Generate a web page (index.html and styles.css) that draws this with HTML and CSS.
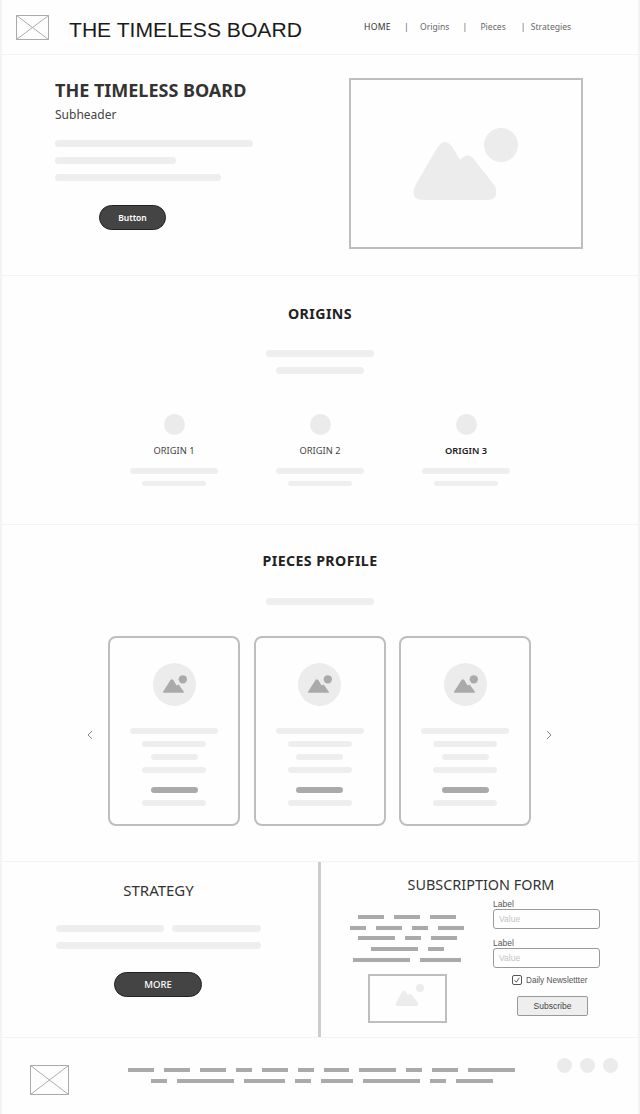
FILE: index.html
```html
<!DOCTYPE html>
<html lang="en">
<head>
<meta charset="utf-8">
<title>The Timeless Board</title>
<link rel="stylesheet" href="styles.css">
</head>
<body>
<div class="page">
  <header class="site-header">
    <svg class="logo" viewBox="0 0 33 25"><path d="M.5.5h32v24H.5zM.5.5l32 24M32.5.5L.5 24.5"/></svg>
    <div class="brand">THE TIMELESS BOARD</div>
    <nav class="nav">
      <a class="nav-home">HOME</a><span class="sep s1">|</span>
      <a>Origins</a><span class="sep s2">|</span>
      <a>Pieces</a><span class="sep s3">|</span>
      <a>Strategies</a>
    </nav>
  </header>

  <section class="hero">
    <div class="hero-text">
      <h1>THE TIMELESS BOARD</h1>
      <p class="sub">Subheader</p>
      <div class="bar w198"></div>
      <div class="bar w121"></div>
      <div class="bar w166"></div>
      <a class="pill hero-btn">Button</a>
    </div>
    <div class="hero-img">
      <svg viewBox="0 0 106 72" class="pic-lg"><path d="M2 58 L24 20 Q32 8 40 20 L47 32 Q56 22 63 34 L82 58 Q87 72 74 72 H10 Q-3 72 2 58Z"/><circle cx="88" cy="17" r="17"/></svg>
    </div>
  </section>

  <section class="origins">
    <h2>ORIGINS</h2>
    <div class="bar w108"></div>
    <div class="bar w88 second"></div>
    <div class="origin-grid">
      <div class="origin"><span class="dot"></span><h3>ORIGIN 1</h3><div class="bar thin w88"></div><div class="bar thin w64"></div></div>
      <div class="origin"><span class="dot"></span><h3>ORIGIN 2</h3><div class="bar thin w88"></div><div class="bar thin w64"></div></div>
      <div class="origin"><span class="dot"></span><h3 class="strong">ORIGIN 3</h3><div class="bar thin w88"></div><div class="bar thin w64"></div></div>
    </div>
  </section>

  <section class="pieces">
    <h2>PIECES PROFILE</h2>
    <div class="bar w108"></div>
    <div class="carousel">
      <svg class="arrow" viewBox="0 0 12 12"><path d="M8 2L4 6l4 4"/></svg>
      <article class="card">
        <div class="avatar"><svg viewBox="0 0 24 18"><path d="M1 16L8 5q1-2 3 0l3 5 2-1 5 7q1 1-1 1H2q-2 0-1-1z"/><circle cx="20" cy="4" r="4"/></svg></div>
        <div class="bar thin w88"></div><div class="bar thin w64 c1"></div><div class="bar thin w47 c1"></div><div class="bar thin w64 c1"></div>
        <div class="bar thin w47 dark"></div><div class="bar thin w64 c2"></div>
      </article>
      <article class="card">
        <div class="avatar"><svg viewBox="0 0 24 18"><path d="M1 16L8 5q1-2 3 0l3 5 2-1 5 7q1 1-1 1H2q-2 0-1-1z"/><circle cx="20" cy="4" r="4"/></svg></div>
        <div class="bar thin w88"></div><div class="bar thin w64 c1"></div><div class="bar thin w47 c1"></div><div class="bar thin w64 c1"></div>
        <div class="bar thin w47 dark"></div><div class="bar thin w64 c2"></div>
      </article>
      <article class="card">
        <div class="avatar"><svg viewBox="0 0 24 18"><path d="M1 16L8 5q1-2 3 0l3 5 2-1 5 7q1 1-1 1H2q-2 0-1-1z"/><circle cx="20" cy="4" r="4"/></svg></div>
        <div class="bar thin w88"></div><div class="bar thin w64 c1"></div><div class="bar thin w47 c1"></div><div class="bar thin w64 c1"></div>
        <div class="bar thin w47 dark"></div><div class="bar thin w64 c2"></div>
      </article>
      <svg class="arrow" viewBox="0 0 12 12"><path d="M4 2l4 4-4 4"/></svg>
    </div>
  </section>

  <section class="split">
    <div class="strategy">
      <h2 class="light">STRATEGY</h2>
      <div class="bar-row"><div class="bar w108"></div><div class="bar w89"></div></div>
      <div class="bar w205"></div>
      <a class="pill more">MORE</a>
    </div>
    <div class="subscribe">
      <h2 class="light sub-title">SUBSCRIPTION FORM</h2>
      <div class="sub-body">
        <div class="sub-left">
          <div class="dashes">
            <div class="dash-row"><i class="d26"></i><i class="d26"></i><i class="d26"></i></div>
            <div class="dash-row"><i class="d16"></i><i class="d26"></i><i class="d16"></i><i class="d26"></i></div>
            <div class="dash-row"><i class="d37"></i><i class="d16"></i><i class="d26"></i></div>
            <div class="dash-row"><i class="d47"></i><i class="d16"></i></div>
            <div class="dash-row"><i class="d57"></i><i class="d41"></i></div>
          </div>
          <div class="sub-img">
            <svg viewBox="0 0 30 22" class="pic-sm"><path d="M1 19L7 8q2-3 4 0l2 3q2-2 4 0l6 8q1 3-2 3H3q-3 0-2-3z"/><circle cx="25" cy="4" r="4"/></svg>
          </div>
        </div>
        <form class="form">
          <label class="field">Label<span class="input">Value</span></label>
          <label class="field">Label<span class="input">Value</span></label>
          <div class="check"><svg viewBox="0 0 10 10"><rect x=".5" y=".5" width="9" height="9" rx="1.5"/><path d="M2.5 5.2l1.8 2 3-4.4"/></svg><span>Daily Newslettter</span></div>
          <span class="sub-btn">Subscribe</span>
        </form>
      </div>
    </div>
  </section>

  <footer class="footer">
    <svg class="logo foot-logo" viewBox="0 0 39 30"><path d="M.5.5h38v29H.5zM.5.5l38 29M38.5.5L.5 29.5"/></svg>
    <div class="foot-links">
      <div class="dash-row"><i class="d26"></i><i class="d26"></i><i class="d26"></i><i class="d16"></i><i class="d26"></i><i class="d16"></i><i class="d26"></i><i class="d37"></i><i class="d16"></i><i class="d26"></i><i class="d47"></i></div>
      <div class="dash-row"><i class="d16"></i><i class="d57"></i><i class="d41"></i><i class="d16"></i><i class="d32"></i><i class="d57"></i><i class="d16"></i><i class="d37"></i></div>
    </div>
    <div class="socials"><span></span><span></span><span></span></div>
  </footer>
</div>
</body>
</html>
```
FILE: styles.css
```css
* { box-sizing: border-box; }
html, body { margin: 0; padding: 0; }
body { background: #f3f3f3; font-family: "Noto Sans", sans-serif; color: #222; }
.page { width: 636px; margin-left: 2px; height: 1114px; }
h1, h2, h3, p { margin: 0; }

.site-header, .hero, .origins, .pieces, .footer { background: #fefefe; }

.site-header { height: 54px; display: flex; align-items: flex-start; margin-bottom: 1px; }
.logo { width: 33px; height: 25px; flex: none; fill: none; stroke: #aaa; stroke-width: 1; }
.site-header .logo { margin: 15px 0 0 14px; }
.brand { font: 21.1px/30px "Liberation Sans", sans-serif; color: #1a1a1a; margin: 15px 0 0 20px; width: 295px; white-space: nowrap; }
.nav { display: flex; font-size: 8.6px; line-height: 12px; color: #666; margin-top: 21px; }
.nav-home { color: #333; letter-spacing: .3px; width: 40px; }
.sep { color: #666; }
.sep.s1 { width: 16px; }
.sep.s2 { width: 18px; margin-left: 13px; }
.sep.s3 { width: 10px; margin-left: 15px; }

.bar { height: 7px; border-radius: 4px; background: #eee; flex: none; }
.bar.thin { height: 6px; }
.w47 { width: 47px; } .w64 { width: 64px; } .w88 { width: 88px; } .w89 { width: 89px; }
.w108 { width: 108px; } .w121 { width: 121px; } .w166 { width: 166px; } .w198 { width: 198px; } .w205 { width: 205px; }

.hero { height: 220px; display: flex; justify-content: space-between; padding: 23px 55px 0 53px; margin-bottom: 1px; }
.hero-text { display: flex; flex-direction: column; }
.hero h1 { font-size: 18px; line-height: 24px; font-weight: 700; color: #333; }
.sub { font-size: 12px; line-height: 18px; color: #444; margin: 4px 0 16px; }
.hero-text .bar + .bar { margin-top: 10px; }
.pill { display: flex; align-items: center; justify-content: center; background: #444; color: #fff; border: 1px solid #222; border-radius: 13px; font-size: 8.5px; font-weight: 600; }
.hero-btn { width: 67px; height: 25px; margin: 24px 0 0 44px; }
.hero-img { width: 234px; height: 171px; border: 2px solid #bebebe; display: flex; align-items: center; justify-content: center; }
.pic-lg { width: 106px; height: 72px; fill: #ececec; }

.origins { height: 248px; display: flex; flex-direction: column; align-items: center; padding-top: 28px; margin-bottom: 1px; }
h2 { font-size: 14.2px; line-height: 20px; font-weight: 700; letter-spacing: .4px; color: #222; text-align: center; }
.origins h2 { margin-bottom: 26px; }
.second { margin-top: 10px; }
.origin-grid { display: grid; grid-template-columns: repeat(3, 146px); margin-top: 40px; }
.origin { display: flex; flex-direction: column; align-items: center; }
.dot { width: 21px; height: 21px; border-radius: 50%; background: #ebebeb; }
h3 { font-size: 9.3px; line-height: 14px; font-weight: 400; color: #444; margin: 9px 0 10px; }
h3.strong { font-weight: 600; color: #222; }
.origin .bar + .bar { margin-top: 7px; height: 5px; }

.pieces { height: 336px; display: flex; flex-direction: column; align-items: center; padding-top: 26px; margin-bottom: 1px; }
.pieces h2 { margin-bottom: 27px; }
.carousel { display: flex; align-items: center; gap: 13.5px; margin: 31px 1px 0 0; }
.arrow { width: 12px; height: 12px; fill: none; stroke: #888; stroke-width: 1; margin: 8px -1.5px 0; }
.card { width: 132px; height: 190px; border: 2px solid #bebebe; border-radius: 8px; display: flex; flex-direction: column; align-items: center; padding-top: 25px; }
.avatar { width: 43px; height: 43px; border-radius: 50%; background: #ececec; display: flex; align-items: center; justify-content: center; margin-bottom: 22px; }
.avatar svg { width: 25px; height: 19px; fill: #aaa; }
.c1 { margin-top: 7px; }
.dark { background: #aaa; margin-top: 14px; height: 7px; }
.c2 { margin-top: 7px; }

.split { height: 175px; display: flex; margin-bottom: 1px; background: #ccc; }
.strategy { width: 316px; display: flex; flex-direction: column; align-items: center; padding: 18px 3px 0 0; margin-right: 3px; background: #fefefe; }
h2.light { font-weight: 400; font-size: 15px; letter-spacing: 0; color: #333; }
.strategy h2 { margin-bottom: 25px; }
.bar-row { display: flex; gap: 8px; margin-bottom: 10px; }
.more { width: 88px; height: 25px; margin: 23px 1px 0 0; font-size: 9.5px; font-weight: 500; }
.subscribe { width: 317px; background: #fefefe; padding-top: 13px; }
.subscribe .sub-title { font-size: 14.4px; padding-left: 3px; }
.sub-body { display: flex; }
.sub-left { width: 172px; display: flex; flex-direction: column; align-items: center; padding: 20px 0 0 0; }
.dashes { display: flex; flex-direction: column; gap: 6.7px; align-items: center; }
.dash-row { display: flex; gap: 10px; justify-content: center; }
.dash-row i { display: block; height: 4px; background: #aaa; }
.d16 { width: 16px; } .d26 { width: 26px; } .d32 { width: 32px; } .d37 { width: 37px; } .d41 { width: 41px; } .d47 { width: 47px; } .d57 { width: 57px; }
.sub-img { width: 79px; height: 49px; border: 2px solid #bebebe; margin-top: 12px; display: flex; align-items: center; justify-content: center; }
.pic-sm { width: 30px; height: 22px; fill: #ececec; margin-left: 6px; margin-top: -6px; }
.form { width: 107px; font-family: "Liberation Sans", sans-serif; display: flex; flex-direction: column; margin-top: 4px; }
.field { display: flex; flex-direction: column; font-size: 8.5px; line-height: 10px; color: #555; margin-bottom: 9px; }
.input { height: 20px; border: 1px solid #999; border-radius: 3px; font-size: 8.5px; line-height: 18px; color: #c4c4c4; padding-left: 5px; }
.check { display: flex; align-items: center; gap: 4px; font-size: 8.2px; color: #555; margin: -3px 0 0 19px; height: 12px; white-space: nowrap; }
.check svg { width: 10px; height: 10px; fill: none; stroke: #555; stroke-width: 1; flex: none; }
.sub-btn { width: 71px; height: 20px; margin: 10px 0 0 24px; background: #eee; border: 1px solid #999; border-radius: 2px; font-size: 8.5px; color: #444; display: flex; align-items: center; justify-content: center; }

.footer { height: 76px; display: flex; }
.foot-logo { width: 39px; height: 30px; margin: 27px 0 0 28px; }
.foot-links { display: flex; flex-direction: column; gap: 7px; width: 387px; margin: 30px 0 0 59px; }
.socials { display: flex; gap: 8px; margin: 20px 0 0 42px; }
.socials span { width: 15px; height: 15px; border-radius: 50%; background: #ebebeb; }
```
